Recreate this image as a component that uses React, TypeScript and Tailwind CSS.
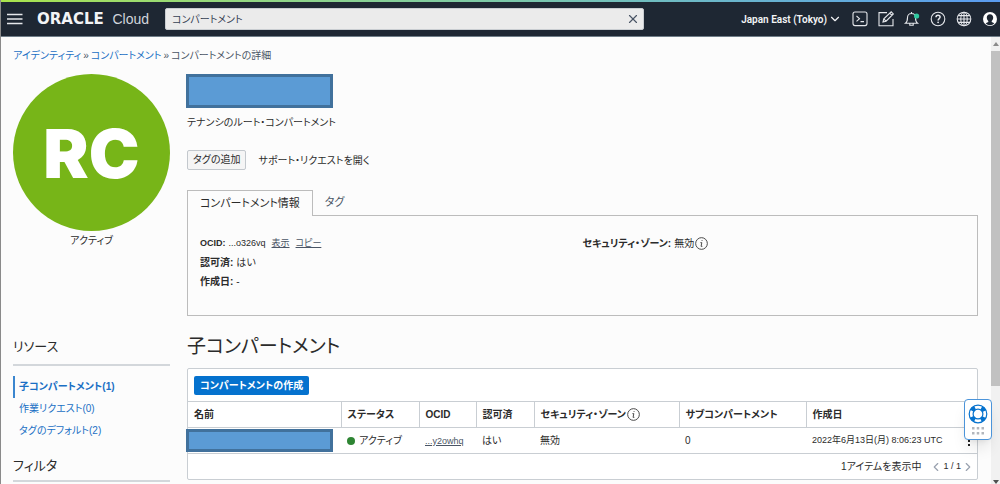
import type { ReactNode } from "react"
import { ChevronDown, ChevronLeft, ChevronRight, X } from "lucide-react"

const resources = [
  { label: "子コンパートメント(1)", active: true },
  { label: "作業リクエスト(0)", active: false },
  { label: "タグのデフォルト(2)", active: false },
]

function HeaderIcon({ label, children }: { label: string; children: ReactNode }) {
  return (
    <button type="button" aria-label={label} className="text-gray-200">
      <svg className="h-4 w-4 overflow-visible" viewBox="0 0 16 16" fill="none" stroke="currentColor" strokeWidth="1.1">
        {children}
      </svg>
    </button>
  )
}

function InfoIcon() {
  return (
    <svg className="h-[13px] w-[13px] shrink-0" viewBox="0 0 12 12" fill="none" stroke="#444" strokeWidth="0.9">
      <circle cx="6" cy="6" r="5.4" />
      <path d="M5 5.2h1.3L5.6 8.6h1.2" />
      <circle cx="6.5" cy="3.3" r="0.5" fill="#444" stroke="none" />
    </svg>
  )
}

function Header() {
  return (
    <header className="shrink-0 border-b border-[#6f7d88] bg-[#1e2733] text-white">
      <div className="h-0.5 bg-gradient-to-r from-[#a9e34b] via-[#7cc9a8] to-[#5a9bf0]" />
      <div className="flex h-[34px] items-center pr-0.5 pl-1.5">
        <button type="button" aria-label="メニュー">
          <svg className="h-3 w-4" viewBox="0 0 16 12" fill="none" stroke="#e5e7eb" strokeWidth="1.5">
            <path d="M0 1.5h15.5M0 6h15.5M0 10.5h15.5" />
          </svg>
        </button>
        <a href="#home" className="ml-3.5 flex w-[112px] shrink-0 items-center justify-between leading-4">
          <span className="font-['DejaVu_Sans',sans-serif] text-[15px] leading-4 font-bold text-gray-100">ORACLE</span>
          <span className="font-['Liberation_Sans',sans-serif] text-sm leading-4 text-gray-300">Cloud</span>
        </a>
        <div className="ml-4 flex h-[22px] w-[479px] items-center rounded-xs border border-[#c9cdd1] bg-[#ebebeb] pr-[3px] pl-1.5">
          <input
            type="text"
            aria-label="検索"
            defaultValue="コンパートメント"
            className="min-w-0 flex-1 bg-transparent text-[10px] text-gray-700 outline-none"
          />
          <button type="button" aria-label="クリア">
            <X className="h-3.5 w-3.5 text-gray-600" strokeWidth={2} />
          </button>
        </div>
        <div className="ml-auto flex items-center gap-[10px]">
          <button type="button" className="flex items-center gap-px font-['Roboto',sans-serif] text-[10px] font-semibold text-gray-100">
            Japan East (Tokyo)
            <ChevronDown className="h-3.5 w-3.5" strokeWidth={2} />
          </button>
          <HeaderIcon label="Cloud Shell">
            <rect x="1" y="1" width="14" height="13.6" rx="2" />
            <path d="M4.5 5l3 2.7-3 2.7M8.5 10.6h3.5" />
          </HeaderIcon>
          <HeaderIcon label="編集">
            <path d="M9 1.6H1v13.2h14V8" />
            <path d="M5 11l.8-3.2 7.4-7 2.1 2.1-7.2 7.3zM11.8 2.2l2.1 2.1M5.8 7.8l2.2 2.4" />
          </HeaderIcon>
          <HeaderIcon label="通知">
            <path d="M1.5 12.3c1.8-1.4 2-2.9 2-5.8C3.500 4 5.300 2.500 7.500 2.500s4 1.500 4 4c0 2.900.2 4.400 2 5.800zM5.800 12.500v1.800h3.400v-1.800M7.500 2.400V1" />
            <circle cx="12.6" cy="5" r="2.6" fill="#2fc9a0" stroke="none" />
          </HeaderIcon>
          <HeaderIcon label="ヘルプ">
            <circle cx="8" cy="8" r="6.8" />
            <path d="M6 6.300C6 5 6.800 4.300 8 4.300s2.100.7 2.100 1.800c0 1.500-2 1.500-2 3.300" strokeWidth="1.5" />
            <circle cx="8.1" cy="11.3" r="0.9" fill="currentColor" stroke="none" />
          </HeaderIcon>
          <HeaderIcon label="言語">
            <circle cx="8" cy="8" r="6.8" />
            <ellipse cx="8" cy="8" rx="3.2" ry="6.8" />
            <path d="M8 1.200v13.600M1.200 8h13.600M2.200 4.600h11.600M2.200 11.400h11.600" />
          </HeaderIcon>
          <HeaderIcon label="プロファイル">
            <circle cx="8" cy="8" r="7" fill="#fff" stroke="none" />
            <path d="M8 3.200c-2 0-3.200 1.400-3.200 3.300 0 1.500.6 2.700 1.500 3.400v1.200l-2.700 1.200a6 6 0 0 0 8.800 0l-2.700-1.200V9.900c.9-.7 1.500-1.900 1.500-3.400C11.200 4.600 10 3.200 8 3.200z" fill="#1e2733" stroke="none" />
          </HeaderIcon>
        </div>
      </div>
    </header>
  )
}

function Sidebar() {
  return (
    <aside className="w-[157px] shrink-0">
      <div className="flex aspect-square w-full items-center justify-center rounded-full bg-[#77b518]">
        <span className="font-['Inter',sans-serif] text-[68px] leading-none font-black text-white">RC</span>
      </div>
      <p className="mt-0.5 text-center leading-4">アクティブ</p>

      <h2 className="mt-[88px] border-b-2 border-[#d3d7db] pb-[7px] text-[13px] leading-5">リソース</h2>
      <ul className="mt-2.5">
        {resources.map((item) => (
          <li key={item.label}>
            <a
              href="#resource"
              className={
                item.active
                  ? "block border-l-2 border-[#3b86cf] pl-1 leading-[22px] font-bold text-[#1a6fc4]"
                  : "block border-l-2 border-transparent pl-1 leading-[22px] text-[#1a6fc4]"
              }
            >
              {item.label}
            </a>
          </li>
        ))}
      </ul>
      <h2 className="mt-3.5 border-b-2 border-[#d3d7db] pb-1 text-[13px] leading-5">フィルタ</h2>
    </aside>
  )
}

function Details() {
  return (
    <section>
      <div className="-ml-px h-[34px] w-[147px] border-3 border-[#41719c] bg-[#5b9bd5]" />
      <p className="mt-[7px] leading-4">テナンシのルート・コンパートメント</p>
      <div className="mt-[19px] flex items-center gap-3">
        <button type="button" className="h-5 rounded-xs border border-[#c3c8cd] bg-[#f5f5f5] px-[5px] leading-4">
          タグの追加
        </button>
        <button type="button">サポート・リクエストを開く</button>
      </div>

      <div role="tablist" className="mt-5 flex text-[11px]">
        <button
          type="button"
          role="tab"
          aria-selected="true"
          className="relative z-10 -mb-px h-[26px] border border-b-0 border-[#bcbcbc] bg-[#fcfcfc] px-3"
        >
          コンパートメント情報
        </button>
        <button type="button" role="tab" aria-selected="false" className="px-3 text-gray-600">
          タグ
        </button>
      </div>
      <dl className="grid grid-cols-2 border border-[#bcbcbc] px-3 pt-[18px] pb-6 leading-[19px]">
        <div>
          <div className="flex gap-[3px] text-[9px]">
            <dt className="font-bold">OCID:</dt>
            <dd className="flex gap-1.5">
              <span>...o326vq</span>
              <a href="#show" className="text-gray-600 underline">表示</a>
              <a href="#copy" className="text-gray-600 underline">コピー</a>
            </dd>
          </div>
          <div className="flex gap-[3px]">
            <dt className="font-bold">認可済:</dt>
            <dd>はい</dd>
          </div>
          <div className="flex gap-[3px]">
            <dt className="font-bold">作成日:</dt>
            <dd>-</dd>
          </div>
        </div>
        <div className="flex gap-[3px] self-start">
          <dt className="font-bold">セキュリティ・ゾーン:</dt>
          <dd className="flex items-center gap-px">
            無効
            <InfoIcon />
          </dd>
        </div>
      </dl>
    </section>
  )
}

function ChildCompartments() {
  return (
    <section>
      <h1 className="mt-[17px] text-[19px] leading-7">子コンパートメント</h1>
      <div className="mt-[7px] rounded-xs border border-[#c9ced3] bg-white">
        <div className="flex h-8 items-center px-1.5">
          <button type="button" className="h-[19px] rounded-xs bg-[#0572ce] px-1.5 font-bold text-white">
            コンパートメントの作成
          </button>
        </div>
        <table className="w-full table-fixed border-collapse text-left">
          <colgroup>
            <col className="w-[153px]" />
            <col className="w-[78px]" />
            <col className="w-[57px]" />
            <col className="w-[58px]" />
            <col className="w-[145px]" />
            <col className="w-[127px]" />
            <col />
          </colgroup>
          <thead>
            <tr className="h-[26px] border-y border-[#c9ced3] [&>th]:px-1.5 [&>th+th]:border-l [&>th+th]:border-[#c9ced3]">
              <th>名前</th>
              <th>ステータス</th>
              <th>OCID</th>
              <th>認可済</th>
              <th>
                <span className="flex items-center gap-px">
                  セキュリティ・ゾーン
                  <InfoIcon />
                </span>
              </th>
              <th>サブコンパートメント</th>
              <th>作成日</th>
            </tr>
          </thead>
          <tbody>
            <tr className="h-[26px] border-b border-[#c9ced3] [&>td+td]:px-1.5">
              <td>
                <div className="-ml-0.5 h-[23px] w-[147px] border-3 border-[#41719c] bg-[#5b9bd5]" />
              </td>
              <td>
                <span className="flex items-center gap-1">
                  <span className="h-2 w-2 rounded-full bg-[#2e8533]" />
                  アクティブ
                </span>
              </td>
              <td>
                <a href="#ocid" className="text-[9px] text-gray-600 underline">...y2owhq</a>
              </td>
              <td>はい</td>
              <td>無効</td>
              <td>0</td>
              <td>
                <div className="flex items-center justify-between">
                  <span className="text-[9px]">2022年6月13日(月) 8:06:23 UTC</span>
                  <button type="button" aria-label="アクション">
                    <svg className="h-3 w-1" viewBox="0 0 4 12" fill="#222">
                      <path d="M1 1h2v2H1zM1 5h2v2H1zM1 9h2v2H1z" />
                    </svg>
                  </button>
                </div>
              </td>
            </tr>
          </tbody>
        </table>
        <div className="flex h-[25px] items-center justify-end pr-0.5">
          <span className="mr-2">1アイテムを表示中</span>
          <button type="button" aria-label="前へ">
            <ChevronLeft className="h-3.5 w-3.5 text-gray-400" strokeWidth={2} />
          </button>
          <span className="text-[9px]">1 / 1</span>
          <button type="button" aria-label="次へ">
            <ChevronRight className="h-3.5 w-3.5 text-gray-400" strokeWidth={2} />
          </button>
        </div>
      </div>
    </section>
  )
}

function HelpWidget() {
  return (
    <button
      type="button"
      aria-label="サポート"
      className="absolute top-[362px] right-2 flex h-[41px] w-7 flex-col items-center gap-[3px] rounded-sm border border-[#4b94da] bg-white pt-1 shadow-lg"
    >
      <svg className="h-5 w-5" viewBox="0 0 20 20" fill="none" stroke="#0572ce">
        <circle cx="10" cy="10" r="8.8" strokeWidth="1.2" />
        <circle cx="10" cy="10" r="4.9" strokeWidth="1.2" />
        <circle cx="10" cy="10" r="6.9" strokeWidth="4" strokeDasharray="4.4 6.438" strokeDashoffset="-3.220" />
      </svg>
      <svg className="h-2 w-3.5" viewBox="0 0 14 8" fill="#b3b7bd">
        <path d="M1 0h2.500v2.500H1zM5.750 0h2.500v2.500h-2.500zM10.500 0H13v2.500h-2.500zM1 5h2.500v2.500H1zM5.750 5h2.500v2.500h-2.500zM10.500 5H13v2.500h-2.500z" />
      </svg>
    </button>
  )
}

export default function App() {
  return (
    <div className="flex h-screen flex-col overflow-hidden border-l border-[#8a8a8a] bg-[#fcfcfc] font-['Liberation_Sans','Noto_Sans_CJK_JP',sans-serif] text-[10px] text-[#2b2b2b] [font-feature-settings:'palt']">
      <Header />
      <div className="relative flex min-h-0 flex-1">
        <div className="min-w-0 flex-1 overflow-hidden pr-[13px] pl-3">
          <nav aria-label="パンくず" className="mt-[11px] flex gap-0.5 leading-4 text-gray-600">
            <a href="#identity" className="text-[#1a6fc4]">アイデンティティ</a>
            <span>»</span>
            <a href="#compartments" className="text-[#1a6fc4]">コンパートメント</a>
            <span>»</span>
            <span>コンパートメントの詳細</span>
          </nav>
          <div className="mt-2.5 flex gap-[17px]">
            <Sidebar />
            <main className="min-w-0 flex-1">
              <Details />
              <ChildCompartments />
            </main>
          </div>
        </div>
        <div className="flex w-[9px] shrink-0 flex-col items-center bg-[#f1f1f1]">
          <svg className="my-1 h-1.5 w-1.5 shrink-0" viewBox="0 0 6 6" fill="#8a8a8a">
            <path d="M0 5l3-4 3 4z" />
          </svg>
          <div className="h-3/4 w-full bg-[#c1c1c1]" />
          <svg className="mt-auto h-1 w-1.5 shrink-0" viewBox="0 0 6 4" fill="#505050">
            <path d="M0 0h6L3 4z" />
          </svg>
        </div>
        <HelpWidget />
      </div>
    </div>
  )
}
